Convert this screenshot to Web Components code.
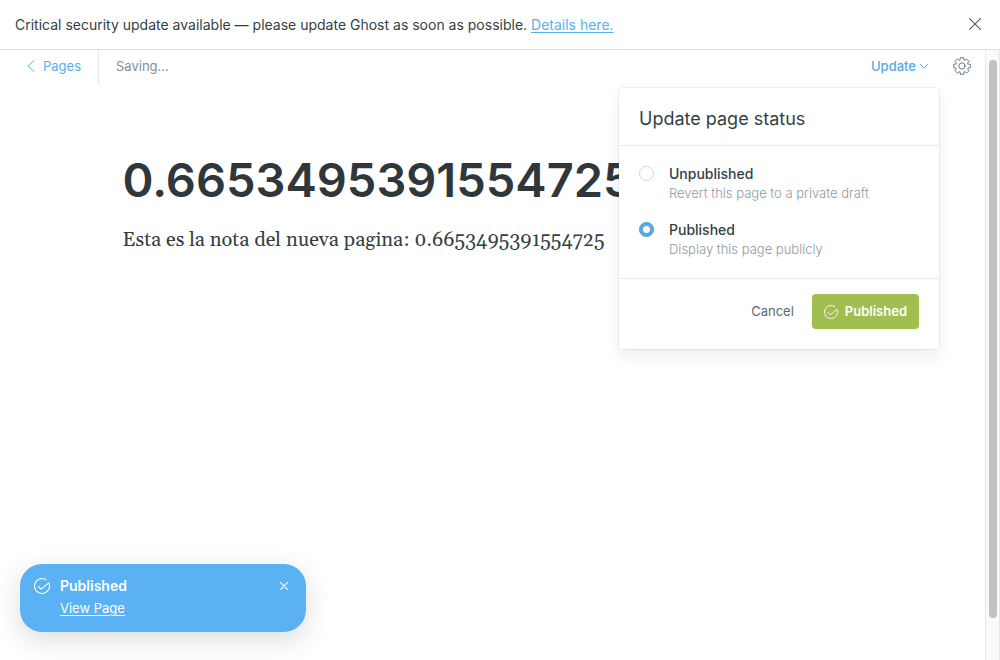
<!DOCTYPE html>
<html lang="en">
<head>
<meta charset="utf-8">
<title>Ghost editor</title>
<style>
html, body { height: 100%; }
body { margin: 0; background: #fff; color: #343f44; font: 14px/20px Inter, "Open Sans", sans-serif; overflow: hidden; }
</style>
</head>
<body>
<ghost-app></ghost-app>
<script>
const reset = `
  *, *::before, *::after { box-sizing: border-box; }
  :host { box-sizing: border-box; }
  svg { display: block; flex: none; fill: none; stroke: currentColor; stroke-linecap: round; stroke-linejoin: round; }
  button { font: inherit; color: inherit; background: none; border: 0; padding: 0; margin: 0; cursor: pointer; }
  h1, h2, p { margin: 0; }
`;
const define = (name, html, css) => {
  const template = document.createElement('template');
  template.innerHTML = `<style>${reset}${css}</style>${html}`;
  customElements.define(name, class extends HTMLElement {
    constructor() {
      super();
      this.attachShadow({ mode: 'open' }).append(template.content.cloneNode(true));
    }
  });
};
const check = (size) => `<svg width="${size}" height="${size}" viewBox="0 0 24 24" stroke-width="1.6" aria-hidden="true"><path d="M6.5 12.5 10.8 16.8 22.17 7.3A11.2 11.2 0 1 1 18.4 2.8"/></svg>`;

// Outline of an eight-toothed cog, centred on the origin.
const cog = () => {
  const points = [];
  for (let i = 0; i < 8; i++) {
    for (const [radius, offset] of [[8.6, -17], [11.3, -12], [11.3, 12], [8.6, 17]]) {
      const angle = (i * 45 + offset) * Math.PI / 180;
      points.push(`${(radius * Math.cos(angle)).toFixed(2)} ${(radius * Math.sin(angle)).toFixed(2)}`);
    }
  }
  return `M${points.join('L')}Z`;
};

define('ghost-alert', `
  <p><slot></slot></p>
  <button aria-label="Dismiss"><svg width="12" height="12" viewBox="0 0 12 12" stroke-width="1.1"><path d="M.3.3l11.4 11.4M11.7.3.3 11.7"/></svg></button>
`, `
  :host { display: flex; align-items: center; justify-content: space-between; flex: none; height: 50px; padding: 0 19px 0 15px; border-bottom: 1px solid #dfe1e3; background: #fff; }
  button { padding-bottom: 2px; color: #54585c; }
`);

define('editor-toolbar', `
  <a class="back" href="#pages"><svg width="8" height="12" viewBox="0 0 8 12" stroke-width="1"><path d="M7 .5 1 6l6 5.5"/></svg>Pages</a>
  <span class="status"><slot></slot></span>
  <button class="update">Update<svg width="8" height="5" viewBox="0 0 8 5" stroke-width="1"><path d="M.5.5 4 4.2 7.5.5"/></svg></button>
  <button aria-label="Settings"><svg width="18" height="18" viewBox="-12 -12 24 24" stroke-width="1.3"><circle r="4.2"/><path d="${cog()}"/></svg></button>
`, `
  :host { display: flex; align-items: center; height: 34px; padding: 0 14px 0 27px; font-size: 13px; }
  .back { display: flex; align-items: center; gap: 8px; align-self: stretch; padding: 0 17px 2px 0; border-right: 1px solid #dfe9f1; color: #55b1f1; text-decoration: none; }
  .status { flex: 1; padding: 0 17px 2px; color: #839097; }
  button { padding-bottom: 2px; color: #607884; }
  .update { display: flex; align-items: center; gap: 4px; margin-right: 25px; color: #55a9e8; font-weight: 500; }
`);

define('page-content', `
  <h1><slot name="title"></slot></h1>
  <p><slot></slot></p>
`, `
  :host { display: block; max-width: 740px; margin: 0 auto; padding-top: 64px; }
  h1 { font-size: 47px; line-height: 64px; font-weight: 600; color: #2f373b; }
  p { margin-top: 12px; font: 20px/32px Georgia, Gelasio, "Liberation Serif", serif; color: #343f44; }
`);

define('publish-menu', `
  <h2>Update page status</h2>
  <div class="options">
    <label><input type="radio" name="status"><span><b>Unpublished</b><small>Revert this page to a private draft</small></span></label>
    <label><input type="radio" name="status" checked><span><b>Published</b><small>Display this page publicly</small></span></label>
  </div>
  <footer><button class="cancel">Cancel</button><button class="publish">${check(14)}<span>Published</span></button></footer>
`, `
  :host { display: block; width: 320px; border-radius: 4px; background: #fff; box-shadow: 0 0 0 1px rgba(99,114,130,.1), 0 8px 16px rgba(27,39,51,.08); }
  h2 { padding: 18px 20px 13px; border-bottom: 1px solid #e5e9ec; font-size: 18px; line-height: 26px; font-weight: 400; }
  .options { display: grid; gap: 18px; padding: 18px 20px 20px; border-bottom: 1px solid #e1eaf1; }
  label { display: flex; gap: 15px; }
  input { appearance: none; flex: none; width: 15px; height: 15px; margin: 2px 0 0; border: 1px solid #c5d9e8; border-radius: 50%; background: #fff; }
  input:checked { border-color: #4294d9; background: radial-gradient(circle, #fff 3px, #5aa9e6 4px); }
  b, small { display: block; }
  b { font-size: 14px; line-height: 20px; font-weight: 500; color: #343f44; }
  small { font-size: 13px; line-height: 18px; font-weight: 300; color: #8f9ba2; }
  footer { display: flex; justify-content: flex-end; align-items: center; gap: 18px; padding: 15px 20px 20px; font-size: 13px; }
  .cancel { color: #586b75; }
  .publish { display: flex; align-items: center; gap: 7px; height: 35px; padding: 0 12px; border-radius: 4px; background: #a1be50; color: #fff; font-weight: 600; }
  .cancel, .publish span { padding-bottom: 2px; }
`);

define('ghost-toast', `
  ${check(16)}
  <div><b><slot name="title"></slot></b><slot></slot></div>
  <button aria-label="Close"><svg width="8" height="8" viewBox="0 0 8 8" stroke-width="1.2"><path d="M.3.3l7.4 7.4M7.7.3.3 7.7"/></svg></button>
`, `
  :host { display: flex; gap: 10px; align-items: flex-start; width: 286px; padding: 12px 18px 12px 14px; border-radius: 22px; background: #5ab1f3; color: #fff; font-size: 13px; box-shadow: 0 8px 28px rgba(0,0,0,.14); }
  div { flex: 1; line-height: 24px; }
  b { display: block; font-size: 14px; line-height: 20px; font-weight: 600; }
  svg { margin-top: 2px; }
  button svg { margin-top: 6px; }
`);

define('scroll-rail', `<div></div>`, `
  :host { display: block; flex: none; width: 15px; padding: 10px 2px 42px 3px; border: solid #e8e8e8; border-width: 0 1px; background: #fafafa; }
  div { width: 8px; height: 100%; border-radius: 4px; background: #c1c1c1; }
`);

define('ghost-app', `
  <ghost-alert>Critical security update available — please update Ghost as soon as possible. <a class="details" href="#details">Details here.</a></ghost-alert>
  <div class="body">
    <main>
      <editor-toolbar>Saving...</editor-toolbar>
      <page-content><span slot="title">0.6653495391554725</span>Esta es la nota del nueva pagina: 0.6653495391554725</page-content>
      <publish-menu></publish-menu>
      <ghost-toast><span slot="title">Published</span><a class="view" href="#view">View Page</a></ghost-toast>
    </main>
    <scroll-rail></scroll-rail>
  </div>
`, `
  :host { display: flex; flex-direction: column; height: 100vh; }
  .body { display: flex; flex: 1; min-height: 0; }
  main { flex: 1; min-width: 0; position: relative; }
  .details { color: #55b1f1; text-underline-offset: 2px; }
  .view { color: inherit; text-underline-offset: 2px; }
  publish-menu { position: absolute; top: 38px; right: 46px; }
  ghost-toast { position: absolute; left: 20px; bottom: 28px; }
`);
</script>
</body>
</html>
